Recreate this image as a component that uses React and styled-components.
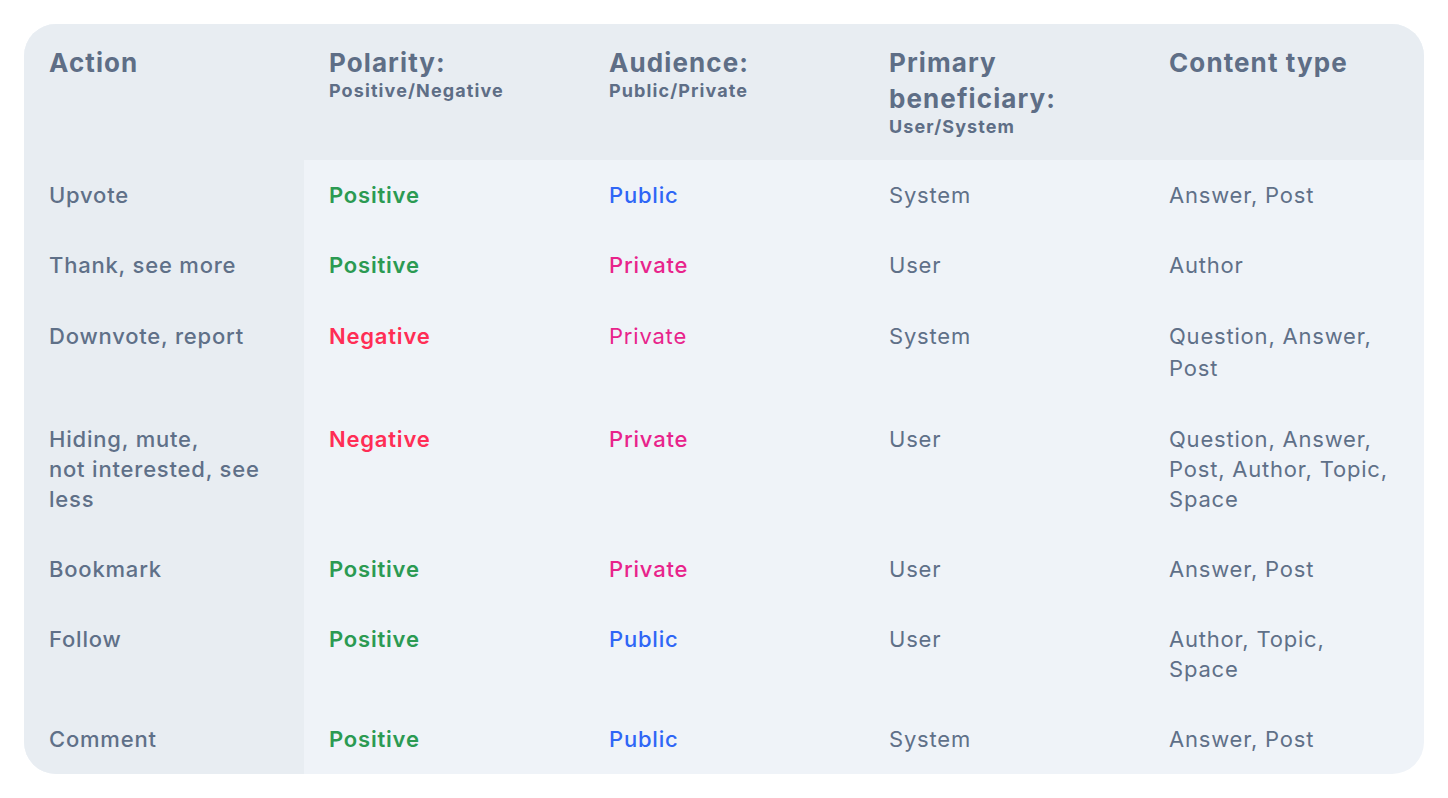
import React from 'react'
import styled, { createGlobalStyle } from 'styled-components'

const GlobalStyle = createGlobalStyle`
  html, body {
    margin: 0;
    padding: 0;
    background: #ffffff;
  }
  body {
    font-family: Inter, "Open Sans", sans-serif;
  }
`

const Page = styled.div`
  padding: 24px;
`

const Card = styled.div`
  width: 1400px;
  border-radius: 32px;
  overflow: hidden;
  background: #eff3f8;
  display: grid;
  grid-template-columns: repeat(5, 280px);
`

const HeadCell = styled.div`
  background: #e8edf2;
  height: 136px;
  box-sizing: border-box;
  padding: 21px 10px 0 25px;
  color: #5e6e86;
  white-space: nowrap;
`

const HeadTitle = styled.div`
  font-size: 26px;
  font-weight: 700;
  line-height: 36px;
  letter-spacing: 1.1px;
`

const HeadSub = styled.div`
  font-size: 18px;
  font-weight: 700;
  line-height: 20px;
  letter-spacing: 1.1px;
`

const Cell = styled.div`
  padding: 20px 10px 20px 25px;
  font-size: 22px;
  letter-spacing: 0.8px;
  line-height: ${p => (p.$loose ? '32px' : '30px')};
  white-space: nowrap;
  color: ${p => p.$color || '#5f7088'};
  font-weight: ${p => p.$weight || 400};
  background: ${p => (p.$first ? '#e8edf2' : 'transparent')};
`

const tone = {
  Positive: '#2b9a52',
  Negative: '#ff2d55',
  Public: '#2f66f6',
  Private: '#e8238b',
}

const columns = [
  { title: 'Action' },
  { title: 'Polarity:', sub: 'Positive/Negative' },
  { title: 'Audience:', sub: 'Public/Private' },
  { title: ['Primary', 'beneficiary:'], sub: 'User/System' },
  { title: 'Content type' },
]

const rows = [
  { action: ['Upvote'], polarity: 'Positive', audience: 'Public', who: 'System', content: ['Answer, Post'] },
  { action: ['Thank, see more'], polarity: 'Positive', audience: 'Private', who: 'User', content: ['Author'] },
  { action: ['Downvote, report'], polarity: 'Negative', audience: 'Private', who: 'System', content: ['Question, Answer,', 'Post'], light: true },
  { action: ['Hiding, mute,', 'not interested, see', 'less'], polarity: 'Negative', audience: 'Private', who: 'User', content: ['Question, Answer,', 'Post, Author, Topic,', 'Space'] },
  { action: ['Bookmark'], polarity: 'Positive', audience: 'Private', who: 'User', content: ['Answer, Post'] },
  { action: ['Follow'], polarity: 'Positive', audience: 'Public', who: 'User', content: ['Author, Topic,', 'Space'] },
  { action: ['Comment'], polarity: 'Positive', audience: 'Public', who: 'System', content: ['Answer, Post'] },
]

const Lines = ({ items }) =>
  items.map((line, i) => (
    <React.Fragment key={i}>
      {i > 0 && <br />}
      {line}
    </React.Fragment>
  ))

export default function App() {
  return (
    <Page>
      <GlobalStyle />
      <Card>
        {columns.map((col, i) => (
          <HeadCell key={i}>
            <HeadTitle>
              <Lines items={[].concat(col.title)} />
            </HeadTitle>
            {col.sub && <HeadSub>{col.sub}</HeadSub>}
          </HeadCell>
        ))}
        {rows.map((row, i) => (
          <React.Fragment key={i}>
            <Cell $first $weight={500} $loose={row.light}>
              <Lines items={row.action} />
            </Cell>
            <Cell $weight={600} $color={tone[row.polarity]} $loose={row.light}>
              {row.polarity}
            </Cell>
            <Cell $weight={row.light ? 400 : 500} $color={tone[row.audience]} $loose={row.light}>
              {row.audience}
            </Cell>
            <Cell $loose={row.light}>{row.who}</Cell>
            <Cell $loose={row.light}>
              <Lines items={row.content} />
            </Cell>
          </React.Fragment>
        ))}
      </Card>
    </Page>
  )
}
